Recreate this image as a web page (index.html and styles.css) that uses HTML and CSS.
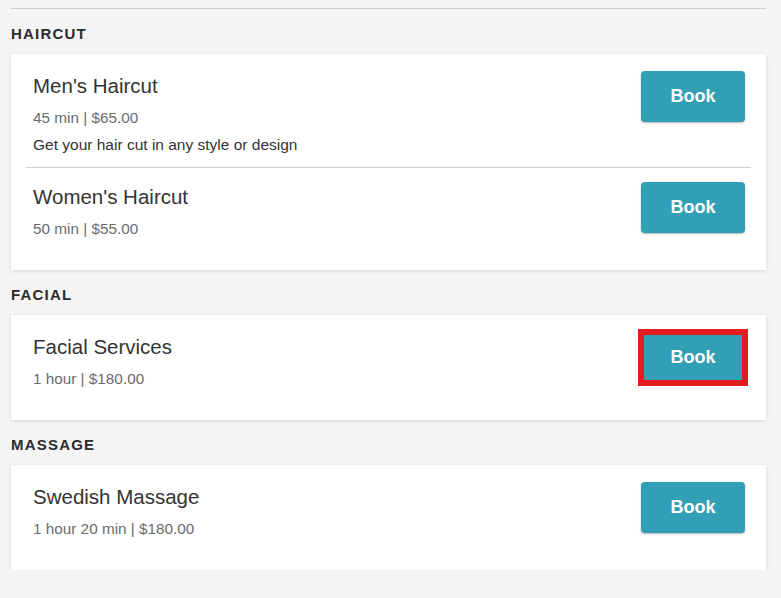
FILE: index.html
```html
<!DOCTYPE html>
<html>
<head>
<meta charset="utf-8">
<link rel="stylesheet" href="styles.css">
</head>
<body>
<div class="page">
  <section class="group">
    <h2 class="group-title">HAIRCUT</h2>
    <div class="card">
      <div class="item">
        <div class="info">
          <div class="name">Men's Haircut</div>
          <div class="meta">45 min | $65.00</div>
          <div class="desc">Get your hair cut in any style or design</div>
        </div>
        <button class="book">Book</button>
      </div>
      <div class="item">
        <div class="info">
          <div class="name">Women's Haircut</div>
          <div class="meta">50 min | $55.00</div>
        </div>
        <button class="book">Book</button>
      </div>
    </div>
  </section>
  <section class="group">
    <h2 class="group-title">FACIAL</h2>
    <div class="card">
      <div class="item">
        <div class="info">
          <div class="name">Facial Services</div>
          <div class="meta">1 hour | $180.00</div>
        </div>
        <button class="book highlighted">Book</button>
      </div>
    </div>
  </section>
  <section class="group">
    <h2 class="group-title">MASSAGE</h2>
    <div class="card">
      <div class="item">
        <div class="info">
          <div class="name">Swedish Massage</div>
          <div class="meta">1 hour 20 min | $180.00</div>
        </div>
        <button class="book">Book</button>
      </div>
    </div>
  </section>
</div>
</body>
</html>
```

FILE: styles.css
```css
html, body {
  margin: 0;
  padding: 0;
  background: #f5f5f5;
}
body {
  font-family: "Liberation Sans", Arial, sans-serif;
  color: #333;
  padding: 8px 15px 0 11px;
}
.page {
  border-top: 1px solid #cfcfcf;
}
.group-title {
  margin: 0;
  padding: 15px 0 10px;
  font-size: 15px;
  line-height: 20px;
  font-weight: bold;
  letter-spacing: 1.2px;
  color: #2b2b2b;
}
.card {
  background: #fff;
  box-shadow: 0 1px 4px rgba(0, 0, 0, 0.14);
  padding: 3px 15px 19px;
}
.item {
  display: flex;
  justify-content: space-between;
  align-items: flex-start;
  padding: 14px 6px 12px 7px;
}
.item + .item {
  border-top: 1px solid #d0d0d0;
}
.name {
  font-size: 20.5px;
  line-height: 30px;
  color: #333;
}
.meta {
  margin-top: 6px;
  font-size: 15.3px;
  line-height: 21px;
  color: #6b6b6b;
}
.desc {
  margin-top: 6px;
  font-size: 15.5px;
  line-height: 21px;
  color: #333;
}
.book {
  width: 104px;
  height: 51px;
  border: none;
  border-radius: 4px;
  background: #319fb6;
  color: #fff;
  font-family: "Liberation Sans", Arial, sans-serif;
  font-size: 18px;
  font-weight: bold;
  box-shadow: 0 1px 2px rgba(0, 0, 0, 0.3);
  padding: 0;
  cursor: pointer;
}
.book.highlighted {
  border-radius: 0;
  outline: 6px solid #e41c1f;
  outline-offset: -3px;
}
```
